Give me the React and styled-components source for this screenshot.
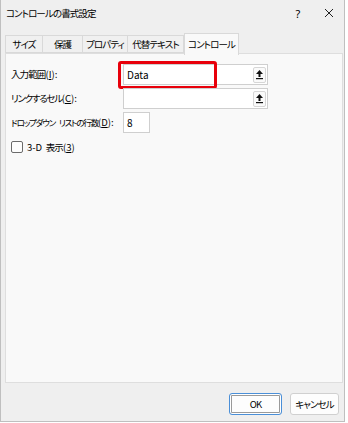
import React from "react";
import styled, { createGlobalStyle } from "styled-components";

const Global = createGlobalStyle`
  html, body { margin: 0; padding: 0; background: #ffffff; }
  body { font-family: "Noto Sans CJK JP", "Noto Sans", sans-serif; }
  #root { width: 348px; height: 423px; }
`;

const Window = styled.div`
  width: 345px;
  height: 422px;
  box-sizing: border-box;
  background: #efefef;
  border-left: 1px solid #bfbfbf;
  border-right: 1px solid #bfbfbf;
  border-bottom: 1px solid #bfbfbf;
  display: flex;
  flex-direction: column;
  font-family: "Noto Sans CJK JP", "Noto Sans", sans-serif;
  font-feature-settings: "palt";
  font-size: 9.5px;
  letter-spacing: -0.9px;
  word-spacing: 3px;
  color: #000;
`;

const TitleBar = styled.div`
  height: 33px;
  flex: none;
  display: flex;
  align-items: flex-start;
  padding-top: 5px;
  box-sizing: border-box;
  padding-left: 5px;
`;

const Title = styled.div`
  flex: 1;
  line-height: 16px;
`;

const TitleButton = styled.div`
  width: ${(p) => p.$w}px;
  height: 16px;
  display: flex;
  align-items: center;
  justify-content: center;
  font-size: 11px;
  letter-spacing: 0;
  font-family: "Noto Sans", sans-serif;
`;

const TabRow = styled.div`
  height: 20px;
  flex: none;
  display: flex;
  align-items: flex-end;
  padding-left: 4px;
  position: relative;
  z-index: 1;
`;

const Tab = styled.div`
  box-sizing: border-box;
  width: ${(p) => p.$w}px;
  height: ${(p) => (p.$active ? 22 : 18)}px;
  margin-bottom: ${(p) => (p.$active ? -2 : 0)}px;
  background: ${(p) => (p.$active ? "#f9f9f9" : "#f0f0f0")};
  border: 1px solid #d9d9d9;
  border-bottom: ${(p) => (p.$active ? "none" : "1px solid #d9d9d9")};
  border-left: ${(p) => (p.$first || p.$active ? "1px solid #d9d9d9" : "none")};
  display: flex;
  align-items: center;
  justify-content: center;
  padding-bottom: ${(p) => (p.$active ? 2 : 0)}px;
  white-space: nowrap;
`;

const Panel = styled.div`
  flex: 1;
  margin: 0 1px 0 4px;
  background: #f9f9f9;
  border: 1px solid #dedede;
  padding: 10px 5px;
  box-sizing: border-box;
`;

const Form = styled.div`
  display: grid;
  grid-template-columns: 112px 1fr;
  row-gap: 3px;
  align-items: center;
`;

const Label = styled.div`
  white-space: nowrap;
  line-height: 21px;
`;

const LabelText = styled.span`
  font-size: ${(p) => (p.$small ? "8.5px" : "inherit")};
  letter-spacing: ${(p) => (p.$small ? "-1.2px" : p.$kana ? "-1.3px" : "inherit")};
`;

const Key = styled.span`
  letter-spacing: 0;
`;

const U = styled.span`
  text-decoration: underline;
  text-underline-offset: 1px;
`;

const FieldWrap = styled.div`
  position: relative;
  width: ${(p) => p.$w}px;
`;

const Input = styled.div`
  box-sizing: border-box;
  width: ${(p) => p.$w}px;
  height: 21px;
  background: #ffffff;
  border: 1px solid #cfcfcf;
  display: flex;
  align-items: center;
  padding-left: 3px;
  font-size: 10px;
  letter-spacing: 0;
  color: #000;
`;

const InputText = styled.span`
  flex: 1;
`;

const RefButton = styled.div`
  box-sizing: border-box;
  width: 13px;
  height: 16px;
  margin-right: 1px;
  border: 1px solid #d6d6d6;
  border-radius: 2px;
  background: #fafafa;
  display: flex;
  align-items: center;
  justify-content: center;
`;

const Highlight = styled.div`
  position: absolute;
  left: -5px;
  top: -3px;
  width: 99px;
  height: 28px;
  box-sizing: border-box;
  border: 3px solid #e8000b;
  border-radius: 3px;
  pointer-events: none;
`;

const CheckRow = styled.div`
  margin-top: 7px;
  display: flex;
  align-items: center;
  gap: 4px;
  word-spacing: 1.5px;
`;

const CheckBox = styled.div`
  width: 10px;
  height: 10px;
  border: 1px solid #6b6b6b;
  border-radius: 2px;
  background: #fdfdfd;
`;

const Footer = styled.div`
  height: 38px;
  flex: none;
  display: flex;
  justify-content: flex-end;
  align-items: flex-start;
  padding-top: 10px;
  padding-right: 5px;
  gap: 8px;
  box-sizing: border-box;
`;

const Button = styled.div`
  box-sizing: border-box;
  width: ${(p) => p.$w}px;
  height: 22px;
  border-radius: 3px;
  background: #fdfdfd;
  border: ${(p) => (p.$primary ? "1px solid #4a8fd8" : "1px solid #d0d0d0")};
  box-shadow: ${(p) => (p.$primary ? "inset 0 0 0 1px #ffffff, inset 0 0 0 2px #9a9a9a" : "none")};
  display: flex;
  align-items: center;
  justify-content: center;
  color: #000;
`;

const UpArrow = () => (
  <svg width="9" height="11" viewBox="0 0 9 11">
    <path d="M4.5 1 L8 5 L5.5 5 L5.5 8 L3.5 8 L3.5 5 L1 5 Z" fill="#111" />
    <rect x="1" y="9" width="7" height="1.2" fill="#111" />
  </svg>
);

const CloseIcon = () => (
  <svg width="10" height="10" viewBox="0 0 10 10">
    <path d="M1 1 L9 9 M9 1 L1 9" stroke="#222" strokeWidth="1" />
  </svg>
);

export default function App() {
  return (
    <>
      <Global />
      <Window>
        <TitleBar>
          <Title>コントロールの書式設定</Title>
          <TitleButton $w={32}>?</TitleButton>
          <TitleButton $w={30}>
            <CloseIcon />
          </TitleButton>
        </TitleBar>
        <TabRow>
          <Tab $w={38} $first>サイズ</Tab>
          <Tab $w={40}>保護</Tab>
          <Tab $w={45}>プロパティ</Tab>
          <Tab $w={56}>代替テキスト</Tab>
          <Tab $w={55} $active>コントロール</Tab>
        </TabRow>
        <Panel>
          <Form>
            <Label>
              <LabelText>入力範囲</LabelText>
              <Key>
                (<U>I</U>):
              </Key>
            </Label>
            <FieldWrap $w={145}>
              <Input $w={145}>
                <InputText>Data</InputText>
                <RefButton>
                  <UpArrow />
                </RefButton>
              </Input>
              <Highlight />
            </FieldWrap>
            <Label>
              <LabelText $kana>リンクするセル</LabelText>
              <Key>
                (<U>C</U>):
              </Key>
            </Label>
            <FieldWrap $w={145}>
              <Input $w={145}>
                <InputText />
                <RefButton>
                  <UpArrow />
                </RefButton>
              </Input>
            </FieldWrap>
            <Label>
              <LabelText $small>ドロップダウン リストの行数</LabelText>
              <Key>
                (<U>D</U>):
              </Key>
            </Label>
            <FieldWrap $w={27}>
              <Input $w={27}>
                <InputText>8</InputText>
              </Input>
            </FieldWrap>
          </Form>
          <CheckRow>
            <CheckBox />
            <span>
              <Key>3-D </Key>
              <LabelText>表示</LabelText>
              <Key>
                (<U>3</U>)
              </Key>
            </span>
          </CheckRow>
        </Panel>
        <Footer>
          <Button $w={53} $primary>OK</Button>
          <Button $w={49}>キャンセル</Button>
        </Footer>
      </Window>
    </>
  );
}
